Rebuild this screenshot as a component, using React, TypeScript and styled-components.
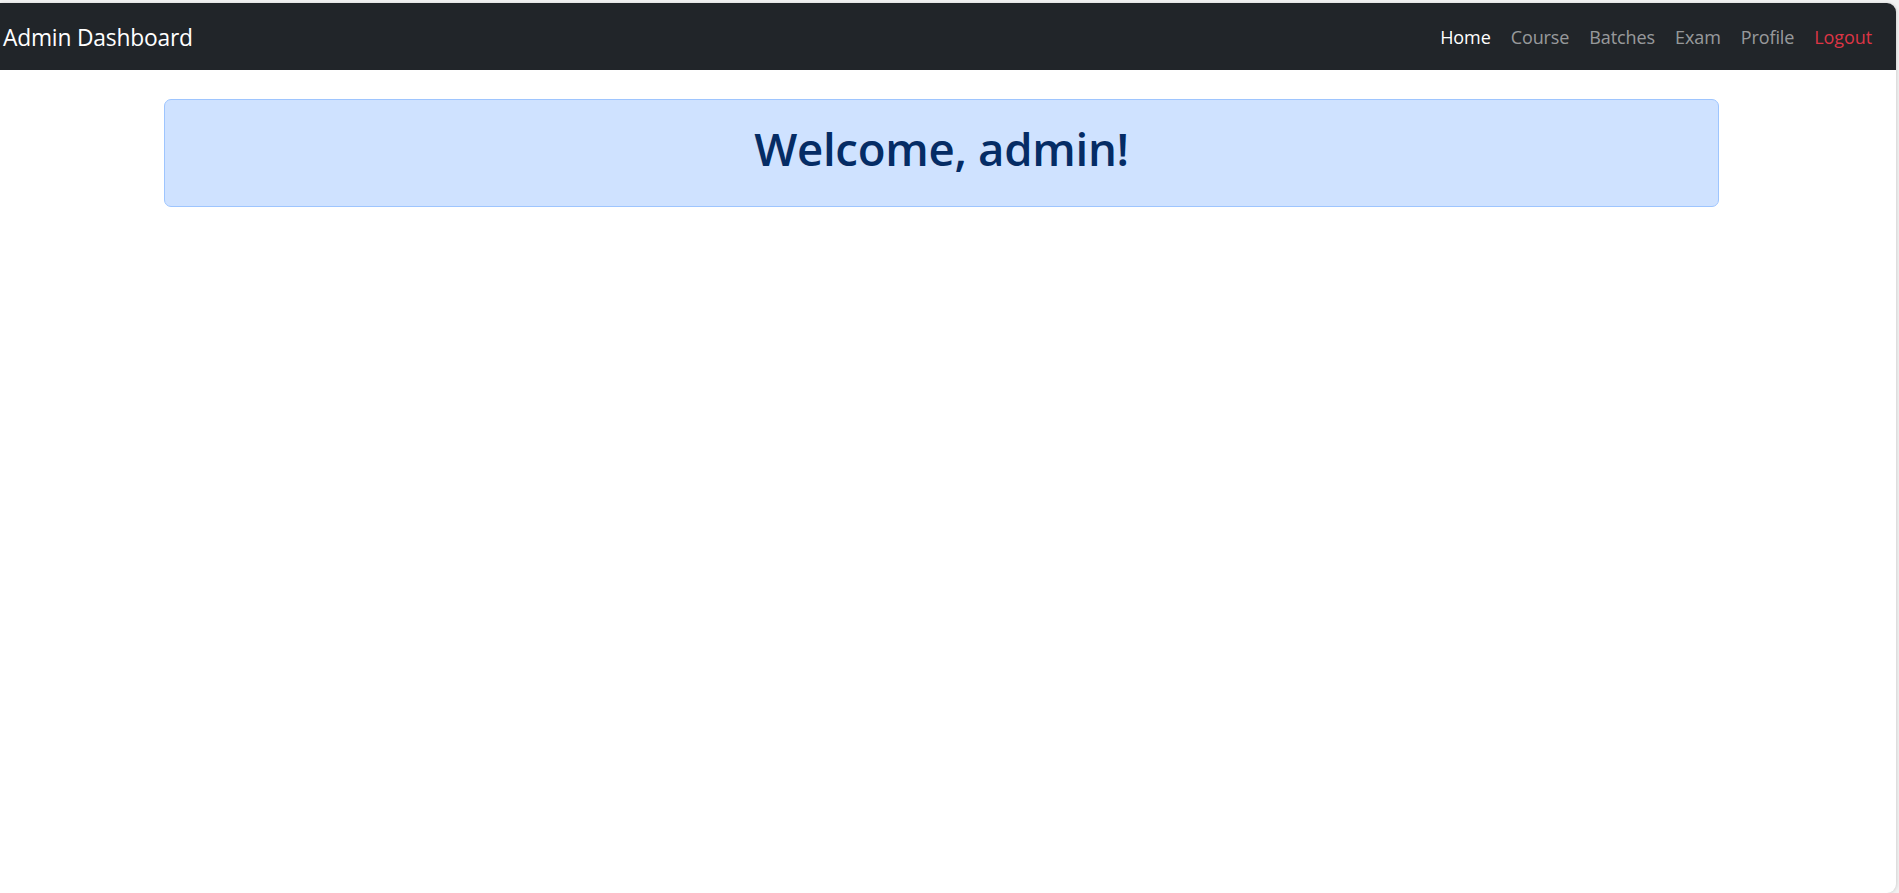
import React from 'react';
import styled, { createGlobalStyle } from 'styled-components';

const GlobalStyle = createGlobalStyle`
  html, body {
    margin: 0;
    padding: 0;
    background: #f1f1f1;
  }
  body {
    font-family: 'Open Sans', 'Noto Sans', sans-serif;
  }
`;

type NavItem = {
  label: string;
  tone: 'active' | 'muted' | 'danger';
};

const navItems: NavItem[] = [
  { label: 'Home', tone: 'active' },
  { label: 'Course', tone: 'muted' },
  { label: 'Batches', tone: 'muted' },
  { label: 'Exam', tone: 'muted' },
  { label: 'Profile', tone: 'muted' },
  { label: 'Logout', tone: 'danger' },
];

const App = () => {
  return (
    <>
      <GlobalStyle />
      <Frame>
        <Window>
          <Navbar>
            <Brand>Admin Dashboard</Brand>
            <NavList>
              {navItems.map((item) => (
                <NavLink key={item.label} tone={item.tone}>
                  {item.label}
                </NavLink>
              ))}
            </NavList>
          </Navbar>
          <Container>
            <Alert>
              <Heading>Welcome, admin!</Heading>
            </Alert>
          </Container>
        </Window>
      </Frame>
    </>
  );
};

const Frame = styled.div`
  width: 1899px;
  height: 893px;
  padding-top: 3px;
  box-sizing: border-box;
  overflow: hidden;
`;

const Window = styled.div`
  width: 1896px;
  height: 890px;
  background: #ffffff;
  border-radius: 0 9px 9px 0;
  box-shadow: 1px 0 3px rgba(0, 0, 0, 0.12);
  overflow: hidden;
  display: flex;
  flex-direction: column;
`;

const Navbar = styled.nav`
  height: 67px;
  flex-shrink: 0;
  background: #212529;
  display: flex;
  align-items: center;
  justify-content: space-between;
  padding: 0 14px 0 3px;
`;

const Brand = styled.a`
  color: #ffffff;
  font-size: 22.8px;
  line-height: 1;
  letter-spacing: -0.2px;
  margin-top: 4px;
`;

const NavList = styled.div`
  display: flex;
  align-items: center;
  margin-top: 1px;
`;

const NavLink = styled.a<{ tone: NavItem['tone'] }>`
  font-size: 18px;
  padding: 0 10px;
  letter-spacing: -0.1px;
  color: ${(p) =>
    p.tone === 'active'
      ? '#ffffff'
      : p.tone === 'danger'
      ? '#dc3545'
      : 'rgba(255, 255, 255, 0.55)'};
`;

const Container = styled.main`
  width: 1555px;
  margin: 29px auto 0 164px;
`;

const Alert = styled.div`
  background: #cfe2ff;
  border: 1.2px solid #9ec5fe;
  border-radius: 7px;
  padding: 20px 19px 19px;
  color: #052c65;
  text-align: center;
`;

const Heading = styled.h1`
  margin: 0 0 10px;
  font-size: 45.6px;
  font-weight: 600;
  line-height: 57px;
  letter-spacing: -0.3px;
`;

export default App;
